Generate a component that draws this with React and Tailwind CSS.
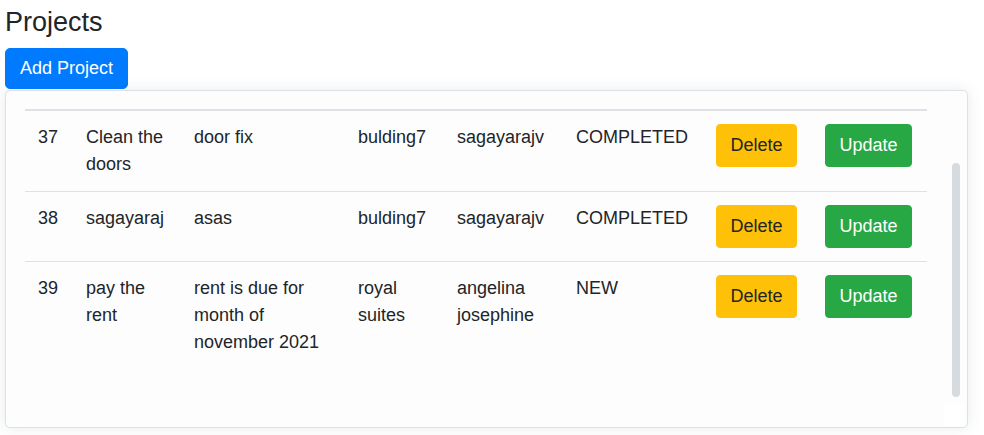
import { useLayoutEffect, useRef } from 'react';

const projects = [
  { id: 37, title: 'Clean the doors', description: 'door fix', building: 'bulding7', assignee: 'sagayarajv', status: 'COMPLETED' },
  { id: 38, title: 'sagayaraj', description: 'asas', building: 'bulding7', assignee: 'sagayarajv', status: 'COMPLETED' },
  { id: 39, title: 'pay the rent', description: 'rent is due for month of november 2021', building: 'royal suites', assignee: 'angelina josephine', status: 'NEW' },
];

const cell = 'p-[13px] align-top text-left';
const head = 'px-[13px] pt-[11px] pb-[15px] align-top text-left';

export default function App() {
  const scrollRef = useRef(null);

  // the list is shown scrolled a little, header row mostly out of view
  useLayoutEffect(() => {
    if (scrollRef.current) scrollRef.current.scrollTop = 54;
  }, []);

  return (
    <div className="min-h-[435px] bg-white pl-[5px] text-[#212529] font-['Liberation_Sans',Arial,sans-serif]">
      <h4 className="pt-[6px] mb-[10px] text-[27px] leading-[32px] font-normal">Projects</h4>
      <button className="bg-[#007bff] text-white text-[18px] leading-[27px] px-[14px] py-[6px] border border-[#007bff] rounded-[5px]">
        Add Project
      </button>

      {/* Card with scrolling table */}
      <div className="relative mt-[1px] w-[963px] h-[338px] bg-[#fdfdfd] border border-[#dee2e6] rounded-[5px] shadow-[0_0_14px_rgba(60,80,100,0.12)]">
        <div ref={scrollRef} className="h-full overflow-hidden pl-[19px] pt-[19px] pb-[120px]">
          <table className="table-fixed w-[902px] border-collapse text-[18px] leading-[27px]">
            <colgroup>
              <col className="w-[48px]" />
              <col className="w-[108px]" />
              <col className="w-[164px]" />
              <col className="w-[99px]" />
              <col className="w-[119px]" />
              <col className="w-[140px]" />
              <col className="w-[109px]" />
              <col className="w-[115px]" />
            </colgroup>
            <thead>
              <tr className="border-b-2 border-[#dee2e6]">
                <th className={head}>#</th>
                <th className={head}>Title</th>
                <th className={head}>Description</th>
                <th className={head}>Building</th>
                <th className={head}>Assignee</th>
                <th className={head}>Status</th>
                <th className={head}></th>
                <th className={head}></th>
              </tr>
            </thead>
            <tbody>
              {projects.map((p) => (
                <tr key={p.id} className="border-t border-[#dee2e6]">
                  <td className={cell}>{p.id}</td>
                  <td className={cell}>{p.title}</td>
                  <td className={cell}>{p.description}</td>
                  <td className={cell}>{p.building}</td>
                  <td className={cell}>{p.assignee}</td>
                  <td className={`${cell} whitespace-nowrap`}>{p.status}</td>
                  <td className={cell}>
                    <button className="bg-[#ffc107] text-[#212529] px-[13.5px] py-[7px] border border-[#ffc107] rounded-[4px] leading-[27px]">
                      Delete
                    </button>
                  </td>
                  <td className={cell}>
                    <button className="bg-[#28a745] text-white px-[13.5px] py-[7px] border border-[#28a745] rounded-[4px] leading-[27px]">
                      Update
                    </button>
                  </td>
                </tr>
              ))}
            </tbody>
          </table>
        </div>

        {/* scrollbar thumb and corner */}
        <div className="absolute right-[7px] top-[72px] w-[8px] h-[234px] rounded-full bg-[#d5dbdf]" />
        <div className="absolute right-[3px] bottom-[1px] w-[20px] h-[23px] bg-white" />
      </div>
    </div>
  );
}
